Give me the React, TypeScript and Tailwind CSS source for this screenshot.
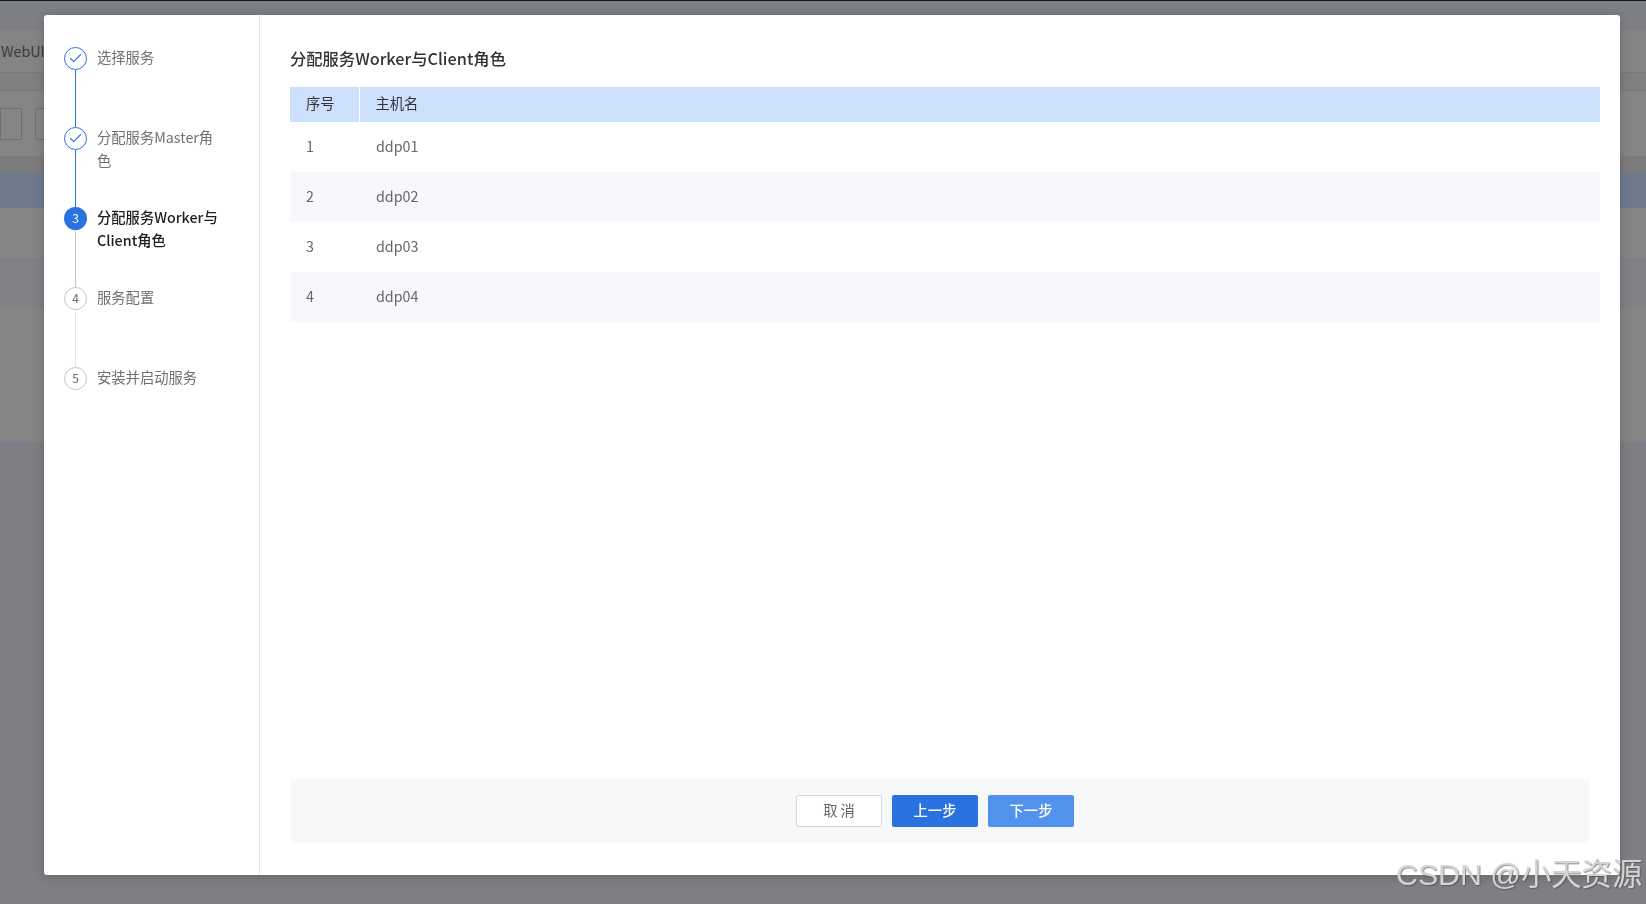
import { Check } from 'lucide-react';

const FONT = "font-['Noto_Sans_CJK_SC','Noto_Sans',sans-serif]";

const steps = [
  { label: '选择服务', state: 'done' },
  { label: '分配服务Master角色', state: 'done' },
  { label: '分配服务Worker与Client角色', state: 'active' },
  { label: '服务配置', state: 'todo' },
  { label: '安装并启动服务', state: 'todo' },
];

const hosts = ['ddp01', 'ddp02', 'ddp03', 'ddp04'];

function StepIcon({ index, state }: { index: number; state: string }) {
  if (state === 'done') {
    return (
      <div className="flex h-[23px] w-[23px] shrink-0 items-center justify-center rounded-full border border-[#2a72e0] bg-white text-[#2a72e0]">
        <Check size={15} strokeWidth={1.75} />
      </div>
    );
  }
  if (state === 'active') {
    return (
      <div className="flex h-[23px] w-[23px] shrink-0 items-center justify-center rounded-full bg-[#2a72e0] pb-px text-xs text-white">
        {index + 1}
      </div>
    );
  }
  return (
    <div className="flex h-[23px] w-[23px] shrink-0 items-center justify-center rounded-full border border-[#c4c4c4] bg-white pb-px text-xs text-[#666666]">
      {index + 1}
    </div>
  );
}

function Stepper() {
  return (
    <aside className="w-[216px] shrink-0 border-r border-[#e3e3e3] pl-5 pt-8">
      {steps.map((step, i) => {
        const lineColor = step.state === 'done' ? 'bg-[#2a72e0]' : step.state === 'active' ? 'bg-[#c4c4c4]' : 'bg-[#e5e5e5]';
        return (
          <div key={step.label} className="flex h-20 gap-[10px]">
            <div className="flex w-[23px] shrink-0 flex-col items-center">
              <StepIcon index={i} state={step.state} />
              {i < steps.length - 1 && <div className={`w-px flex-1 ${lineColor}`} />}
            </div>
            <p
              className={`-mt-[2px] w-[125px] text-[14.3px] leading-[23px] ${
                step.state === 'active' ? 'font-medium text-[#1f1f1f]' : 'text-[#707070]'
              }`}
            >
              {step.label}
            </p>
          </div>
        );
      })}
    </aside>
  );
}

function HostTable() {
  return (
    <table className="w-[1310px] table-fixed border-collapse text-[14.3px]">
      <thead>
        <tr className="h-[35px] bg-[#cce0fd] text-left text-[#333333]">
          <th className="w-[69px] border-r border-white pb-[3px] pl-4 font-normal">序号</th>
          <th className="pb-[3px] pl-4 font-normal">主机名</th>
        </tr>
      </thead>
      <tbody className="text-[#666666]">
        {hosts.map((host, i) => (
          <tr key={host} className={`h-[50px] ${i % 2 === 1 ? 'bg-[#f6f8fb]' : 'bg-white'}`}>
            <td className="pb-[2px] pl-4">{i + 1}</td>
            <td className="pb-[2px] pl-[17px]">{host}</td>
          </tr>
        ))}
      </tbody>
    </table>
  );
}

function Dialog() {
  return (
    <div className="fixed left-[44px] top-[15px] flex h-[860px] w-[1576px] rounded-[3px] bg-white shadow-[0_2px_12px_rgba(0,0,0,0.2)]">
      <Stepper />
      <section className="flex min-w-0 flex-1 flex-col pb-8 pl-[30px] pr-5 pt-8">
        <h2 className="mb-4 -mt-px h-[25px] text-[16.3px] font-medium leading-[24px] text-[#333333]">分配服务Worker与Client角色</h2>
        <HostTable />
        <div className="mt-auto flex h-16 w-[1300px] items-center justify-center gap-[10px] bg-[#f7f8fa] pr-[10px]">
          <button className="h-8 w-[86px] rounded-[2px] border border-[#d9d9d9] bg-white pb-[3px] pl-[3px] text-[14.3px] tracking-[3px] text-[#666666]">
            取消
          </button>
          <button className="h-8 w-[86px] rounded-[2px] bg-[#2a72e0] pb-[3px] text-[14.3px] font-medium text-white">上一步</button>
          <button className="h-8 w-[86px] rounded-[2px] bg-[#5193ec] pb-[3px] text-[14.3px] font-medium text-white">下一步</button>
        </div>
      </section>
    </div>
  );
}

// the dimmed page that sits behind the dialog
function PageBehind() {
  return (
    <div className="flex h-[904px] w-full flex-col bg-[#7e7f84]">
      <div className="h-px bg-[#0e1a2b]" />
      <div className="h-[29px] bg-[#7d7f85]" />
      <div className="flex h-[43px] items-center border-b border-[#797979] bg-[#848484] pl-px text-[14.3px] text-[#3d3a38]">WebUI</div>
      <div className="h-[18px] border-b border-[#7b7b7b] bg-[#808080]" />
      <div className="flex h-[65px] items-start gap-[13px] bg-[#858585] pt-[17px]">
        <div className="h-8 w-[22px] rounded-r-[2px] border border-[#6f6f6f]" />
        <div className="h-8 w-[40px] rounded-l-[2px] border border-[#6f6f6f]" />
      </div>
      <div className="h-[17px] bg-[#7c7c7e]" />
      <div className="h-[35px] bg-[#6f7b8c]" />
      <div className="h-[50px] bg-[#858585]" />
      <div className="h-[50px] bg-[#7f8184]" />
      <div className="h-[134px] bg-[#858585]" />
    </div>
  );
}

export default function App() {
  return (
    <div className={`relative h-[904px] w-full overflow-hidden ${FONT}`}>
      <PageBehind />
      <Dialog />
      <span className="absolute left-[1396px] top-[855px] whitespace-nowrap font-['Liberation_Sans','Noto_Sans_CJK_SC',sans-serif] text-[30.3px] leading-[40px] text-[#d4d4d4] [text-shadow:1px_1px_1px_rgba(70,70,70,0.6)]">
        CSDN @小天资源
      </span>
    </div>
  );
}
